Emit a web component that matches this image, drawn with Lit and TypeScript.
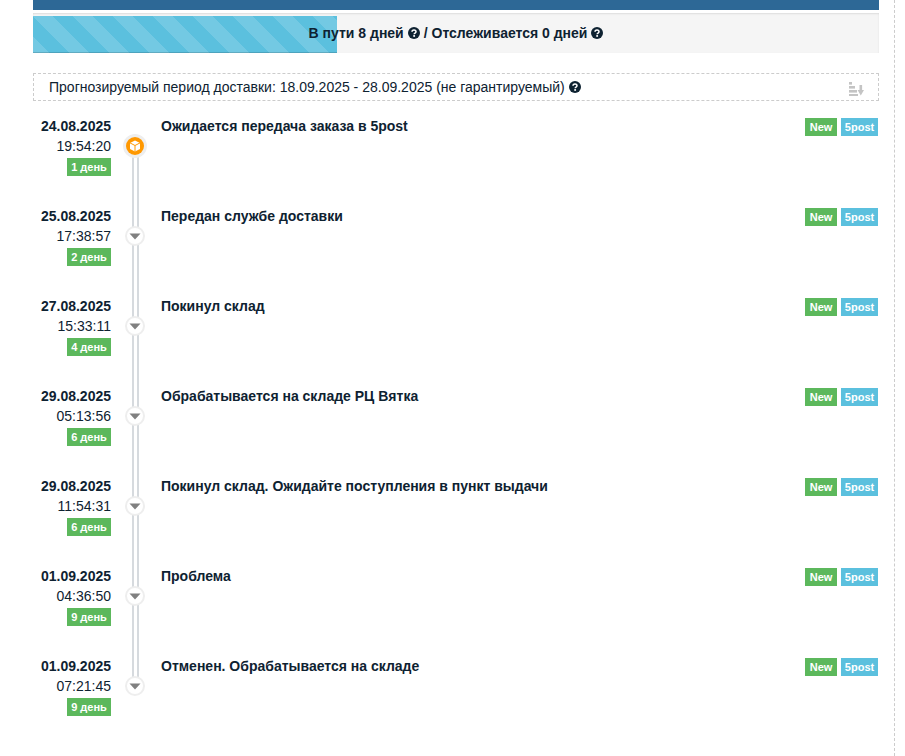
import { LitElement, html, css, svg } from "lit";
import { customElement } from "lit/decorators.js";

const events = [
  ["24.08.2025", "19:54:20", "1 день", "Ожидается передача заказа в 5post"],
  ["25.08.2025", "17:38:57", "2 день", "Передан службе доставки"],
  ["27.08.2025", "15:33:11", "4 день", "Покинул склад"],
  ["29.08.2025", "05:13:56", "6 день", "Обрабатывается на складе РЦ Вятка"],
  ["29.08.2025", "11:54:31", "6 день", "Покинул склад. Ожидайте поступления в пункт выдачи"],
  ["01.09.2025", "04:36:50", "9 день", "Проблема"],
  ["01.09.2025", "07:21:45", "9 день", "Отменен. Обрабатывается на складе"],
];

const q = html`<svg class="q" viewBox="0 0 24 24"><circle cx="12" cy="12" r="12" fill="#0e2231"/><path d="M8 9.5a4 3.6 0 0 1 8 0c0 2.6-3.6 2.6-3.6 4.8" fill="none" stroke="#fff" stroke-width="3"/><rect x="10.5" y="16.2" width="3.6" height="3.4" fill="#fff"/></svg>`;

@customElement("app-root")
export class AppRoot extends LitElement {
  static styles = css`
    :host { display: block; height: 756px; box-sizing: border-box; font-family: "Liberation Sans", Arial, sans-serif; font-size: 14px; color: #0e2231; overflow: hidden; }
    .page { display: flex; padding-left: 33px; }
    .wrap { flex: none; width: 846px; height: 756px; }
    .rule { flex: none; width: 0; height: 756px; border-left: 1px dashed #ccc; margin-left: 15px; }
    .top { height: 10px; background: #2d6896; }
    .progress { margin-top: 3px; height: 40px; background: #f5f5f5; box-shadow: inset 0 1px 2px rgba(0,0,0,.1); position: relative; display: flex; align-items: center; justify-content: center; font-weight: 700; }
    .bar { position: absolute; left: 0; top: 3px; bottom: 0; width: 304px; background-color: #5bc0de; box-shadow: inset 0 -1px 0 rgba(0,0,0,.15); background-image: linear-gradient(45deg, rgba(255,255,255,.15) 25%, transparent 25%, transparent 50%, rgba(255,255,255,.15) 50%, rgba(255,255,255,.15) 75%, transparent 75%, transparent); background-size: 40px 40px; }
    .ptext { position: relative; display: flex; align-items: center; gap: 4px; }
    .q { width: 12px; height: 12px; flex: none; }
    .forecast { margin-top: 20px; height: 28px; box-sizing: border-box; border: 1px dashed #ccc; display: flex; align-items: center; padding: 0 14px 0 15px; gap: 4px; }
    .sort { margin-left: auto; width: 16px; height: 14px; align-self: flex-end; margin-bottom: 4px; }
    .list { margin-top: 5px; }
    .row { height: 90px; display: flex; }
    .when { width: 78px; text-align: right; line-height: 20px; padding-top: 10px; box-sizing: border-box; display: flex; flex-direction: column; align-items: flex-end; }
    .date { font-weight: 700; }
    .days { margin-top: 2px; height: 18px; width: 44px; background: #5cb85c; color: #fff; font-size: 11px; font-weight: 700; line-height: 18px; text-align: center; }
    .line { width: 50px; flex: none; position: relative; }
    .line::before { content: ""; position: absolute; left: 20.5px; top: 40px; width: 7px; height: 100%; box-sizing: border-box; border-left: 2px solid #d6dade; border-right: 2px solid #d6dade; }
    .row:last-child .line::before { display: none; }
    .dot { position: absolute; left: 14px; top: 30px; width: 20px; height: 20px; z-index: 1; }
    .dot.big { left: 12px; top: 28px; width: 24px; height: 24px; }
    .title { font-weight: 700; line-height: 20px; padding-top: 10px; flex: 1; }
    .tags { display: flex; gap: 4px; margin-top: 12px; margin-right: 1px; height: 18px; }
    .tag { height: 18px; line-height: 18px; padding: 0; font-size: 11px; font-weight: 700; color: #fff; text-align: center; }
    .new { width: 32px; background: #5cb85c; }
    .post { width: 37px; background: #5bc0de; }
  `;

  private dot(first: boolean) {
    return first
      ? svg`<svg class="dot big" viewBox="0 0 24 24"><circle cx="12" cy="12" r="12" fill="#eeeeee"/><circle cx="12" cy="12" r="9" fill="#ff9800"/><path d="M12 6.5l5 2.4v6L12 17.6l-5-2.7v-6z" fill="#fff"/><path d="M7 8.9l5 2.6 5-2.6M12 11.5v6.1" fill="none" stroke="#ff9800" stroke-width="1"/></svg>`
      : svg`<svg class="dot" viewBox="0 0 20 20"><circle cx="10" cy="10" r="9" fill="#fff" stroke="#eeeeee" stroke-width="2"/><path d="M4.5 7.5h11L10 13.5z" fill="#808080"/></svg>`;
  }

  render() {
    return html`<div class="page"><div class="wrap">
      <div class="top"></div>
      <div class="progress"><div class="bar"></div>
        <div class="ptext">В пути 8 дней ${q} / Отслеживается 0 дней ${q}</div></div>
      <div class="forecast"><span>Прогнозируемый период доставки: 18.09.2025 - 28.09.2025 (не гарантируемый)</span>${q}
        <svg class="sort" viewBox="0 0 16 14"><g fill="#c4c4c4"><rect x="1" y="0" width="3" height="2.6"/><rect x="1" y="4" width="6" height="2.6"/><rect x="1" y="8" width="8" height="2.6"/><rect x="1" y="12" width="9" height="2"/><path d="M11.5 3h2.6v5H16l-3.2 5.4L9.6 8h1.9z"/></g></svg>
      </div>
      <div class="list">
        ${events.map((e, i) => html`<div class="row">
          <div class="when"><span class="date">${e[0]}</span><span>${e[1]}</span><span class="days">${e[2]}</span></div>
          <div class="line">${this.dot(i === 0)}</div>
          <div class="title">${e[3]}</div>
          <div class="tags"><span class="tag new">New</span><span class="tag post">5post</span></div>
        </div>`)}
      </div>
    </div><div class="rule"></div></div>`;
  }
}
